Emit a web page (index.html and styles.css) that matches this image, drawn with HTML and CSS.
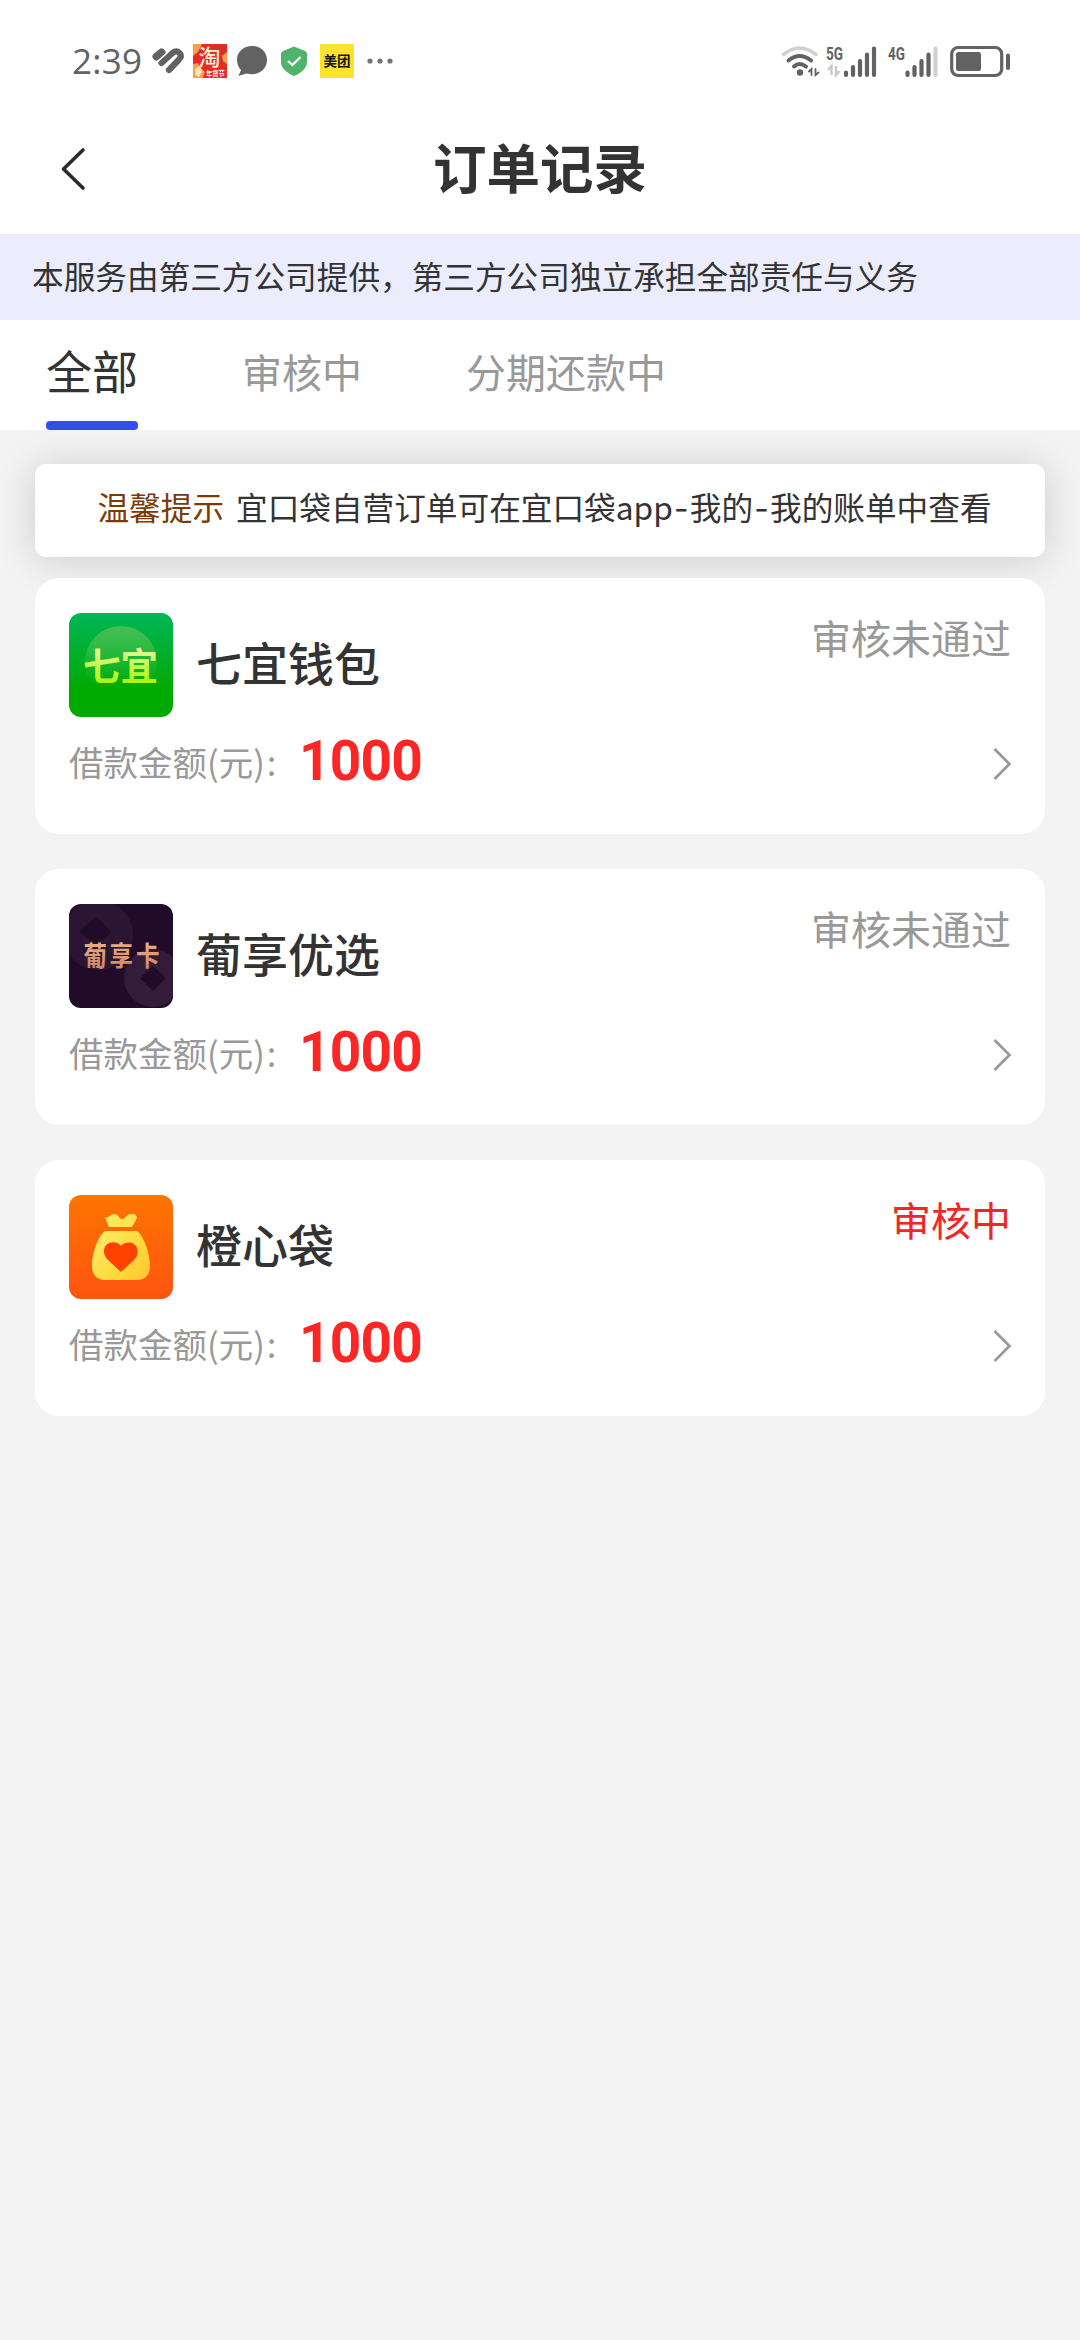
FILE: index.html
```html
<!DOCTYPE html>
<html lang="zh-CN">
<head>
<meta charset="utf-8">
<title>订单记录</title>
<link rel="stylesheet" href="styles.css">
</head>
<body>
<header class="top">
  <div class="status">
    <span class="time">2:39</span>
    <svg class="health" width="34" height="34" viewBox="0 0 34 34">
      <path d="M4.500 12.500L9.500 8.500" stroke="#626262" stroke-width="8" stroke-linecap="round"/>
      <path d="M9.500 19L20.500 9Q25 5.500 28 9.500Q30 12.500 27 15.500L17 26" fill="none" stroke="#626262" stroke-width="6.200" stroke-linecap="round" stroke-linejoin="round"/>
      <path d="M13 22.500L24 12" stroke="#fff" stroke-width="1.600" stroke-linecap="round"/>
      <path d="M6 17L15.500 8.500" stroke="#fff" stroke-width="1.200"/>
    </svg>
    <svg class="taobao" width="34" height="34" viewBox="0 0 34 34">
      <path d="M0 0H34V34H0Z" fill="#e62a25"/>
      <path d="M0 0H9L5 8 0 12ZM34 8L29 12 30 17 34 20ZM0 20L5 19 8 24 12 28 10 34H0Z" fill="#f7a04c"/>
      <path d="M2 25L7 22 9 28 6 33 2 31Z" fill="#ffe3bd"/>
      <text x="5.500" y="21" font-size="22" font-weight="500" fill="#fff2dc">淘</text>
      <text x="13" y="31.500" font-size="6.300" font-weight="700" fill="#fff">年货节</text>
    </svg>
    <svg class="chat" width="32" height="34" viewBox="0 0 32 34">
      <path d="M16 2C7.500 2 1 8 1 15.500c0 4.500 1.500 8 4 10.500L2.500 32l8-2.500c1.800.5 3.600.8 5.500.8 8.500 0 15-6.300 15-14.300S24.500 2 16 2Z" fill="#626262"/>
    </svg>
    <svg class="shield" width="28" height="34" viewBox="0 0 28 34">
      <path d="M14 2.500L25 7Q27 7.800 27 10V18C27 25 20 29.500 14 32 8 29.500 1 25 1 18V10Q1 7.800 3 7Z" fill="#50b36c"/>
      <path d="M8 17L12.500 21 20.500 13" fill="none" stroke="#fff" stroke-width="2.300"/>
    </svg>
    <svg class="meituan" width="34" height="34" viewBox="0 0 34 34">
      <path d="M0 0H34V34H0Z" fill="#fbe22d"/>
      <text x="3.500" y="22" font-size="13.500" font-weight="700" fill="#151515">美团</text>
    </svg>
    <svg class="more" width="28" height="34" viewBox="0 0 28 34" fill="#757575">
      <circle cx="4" cy="17" r="2.600"/><circle cx="14" cy="17" r="2.600"/><circle cx="24" cy="17" r="2.600"/>
    </svg>
    <svg class="wifi" width="40" height="34" viewBox="0 0 40 34" fill="none" stroke-linecap="round">
      <path d="M2.500 10.500Q18.500-2.500 35 10.500" stroke="#d0d0d0" stroke-width="3.600"/>
      <path d="M7.500 16.500Q18.500 7.500 30 16.500" stroke="#626262" stroke-width="4"/>
      <path d="M13 22.500Q18.500 17.500 25 22.500" stroke="#626262" stroke-width="4"/>
      <circle cx="19" cy="28.500" r="3.200" fill="#626262"/>
      <path d="M28 27.500L30.500 25V31M34.500 25V31L37.500 28.500" stroke="#626262" stroke-width="1.800"/>
    </svg>
    <svg class="signal5" width="52" height="34" viewBox="0 0 52 34">
      <text x="0" y="15.500" font-size="18" textLength="17" lengthAdjust="spacingAndGlyphs">5G</text>
      <path d="M2 26L5.500 22V31M10 22V31L13.500 27" fill="none" stroke="#c9c9c9" stroke-width="2.400"/>
      <path d="M20 28.500V31M27 23V31M34 17V31M41 10.500V31M48 4.500V31" stroke="#626262" stroke-width="4.200" stroke-linecap="round"/>
    </svg>
    <svg class="signal4" width="52" height="34" viewBox="0 0 52 34">
      <text x="0" y="15.500" font-size="18" textLength="17" lengthAdjust="spacingAndGlyphs">4G</text>
      <path d="M19.500 28.500V31M26.500 23V31M33.500 17V31M40.500 10.500V31" stroke="#626262" stroke-width="4.200" stroke-linecap="round"/>
      <path d="M47.500 4.500V31" stroke="#d0d0d0" stroke-width="4.200" stroke-linecap="round"/>
    </svg>
    <svg class="battery" width="62" height="34" viewBox="0 0 62 34">
      <rect x="1.700" y="3.500" width="50" height="28" rx="6.500" fill="none" stroke="#626262" stroke-width="3.200"/>
      <rect x="6" y="8" width="25" height="19" rx="2.500" fill="#626262"/>
      <path d="M58 11.500V24" stroke="#626262" stroke-width="4" stroke-linecap="round"/>
    </svg>
  </div>
  <div class="nav">
    <svg class="back" width="28" height="48" viewBox="0 0 28 48"><path d="M24 5L4.500 24 24 43" fill="none" stroke="#2b2b2b" stroke-width="3.600" stroke-linecap="round" stroke-linejoin="round"/></svg>
    <h1 class="title">订单记录</h1>
  </div>
</header>
<div class="notice">本服务由第三方公司提供，第三方公司独立承担全部责任与义务</div>
<nav class="tabs">
  <span class="tab active">全部</span>
  <span class="tab">审核中</span>
  <span class="tab">分期还款中</span>
</nav>
<main class="content">
  <div class="tip"><span class="tip-label">温馨提示</span><span class="tip-text">宜口袋自营订单可在宜口袋app<span class="dash">-</span>我的<span class="dash">-</span>我的账单中查看</span></div>
  <section class="card">
    <div class="card-head">
      <svg class="logo" viewBox="0 0 104 104">
        <defs>
          <linearGradient id="green" x2="0" y2="1"><stop stop-color="#00b657"/><stop offset=".75" stop-color="#00aa00"/></linearGradient>
          <linearGradient id="disc" x2="0" y2="1"><stop stop-color="#48bf50"/><stop offset=".8" stop-color="#48bf50" stop-opacity="0"/></linearGradient>
          <linearGradient id="lime" x2="0" y2="1"><stop offset=".2" stop-color="#e7f99b"/><stop offset=".9" stop-color="#a7f500"/></linearGradient>
        </defs>
        <path d="M0 0H104V104H0Z" fill="url(#green)"/>
        <circle cx="52" cy="49" r="36" fill="url(#disc)"/>
        <text x="14" y="67" font-size="37.500" font-weight="700" fill="url(#lime)">七宜</text>
      </svg>
      <h2 class="name">七宜钱包</h2>
      <span class="state">审核未通过</span>
    </div>
    <div class="card-row">
      <span class="label">借款金额(元)<span class="colon">:</span></span><strong class="amount">1000</strong>
      <svg class="arrow" width="20" height="34" viewBox="0 0 20 34"><path d="M2.500 2L17.500 17 2.500 32" fill="none" stroke="#999" stroke-width="2.700"/></svg>
    </div>
  </section>
  <section class="card">
    <div class="card-head">
      <svg class="logo" viewBox="0 0 104 104">
        <defs><linearGradient id="gold" x2="0" y2="1"><stop stop-color="#f0bd8b"/><stop offset="1" stop-color="#ca7e62"/></linearGradient></defs>
        <path d="M0 0H104V104H0Z" fill="#200c29"/>
        <circle cx="29" cy="31" r="35" fill="#2a1532"/><circle cx="84" cy="74" r="29" fill="#321c37"/>
        <path d="M27 12L43 28 27 40 10 28ZM84 62L97 74 84 87 71 74Z" fill="#200c29"/>
        <text transform="translate(0 62) scale(1 1.180)" font-size="23.500" font-weight="700" fill="url(#gold)"><tspan x="14.500">葡</tspan><tspan x="40.500">享</tspan><tspan x="67">卡</tspan></text>
      </svg>
      <h2 class="name">葡享优选</h2>
      <span class="state">审核未通过</span>
    </div>
    <div class="card-row">
      <span class="label">借款金额(元)<span class="colon">:</span></span><strong class="amount">1000</strong>
      <svg class="arrow" width="20" height="34" viewBox="0 0 20 34"><path d="M2.500 2L17.500 17 2.500 32" fill="none" stroke="#999" stroke-width="2.700"/></svg>
    </div>
  </section>
  <section class="card">
    <div class="card-head">
      <svg class="logo" viewBox="0 0 104 104">
        <defs>
          <linearGradient id="orange" x2="0" y2="1"><stop stop-color="#ff7500"/><stop offset="1" stop-color="#ff5410"/></linearGradient>
          <linearGradient id="bag" x2="1" y2="1"><stop stop-color="#fff174"/><stop offset=".6" stop-color="#ffdc3f"/><stop offset="1" stop-color="#ffc52f"/></linearGradient>
        </defs>
        <path d="M0 0H104V104H0Z" fill="url(#orange)"/>
        <path d="M36 22.500C40 23 42 19 46 19C49 19 50 24 53 24C57 24 57 19 62 19C67 18 69 22 67 25L63 32H40ZM36 36H68C74 40 81 57 81 71C81 80 76 85 68 85H36C28 85 23 80 23 71C23 57 30 40 36 36Z" fill="url(#bag)"/>
        <path d="M52 77L39 65C33 59 34 51 40 48C45 46 50 48 52 51C54 48 60 46 65 49C70 53 70 60 65 65Z" fill="#ff4200"/>
      </svg>
      <h2 class="name">橙心袋</h2>
      <span class="state pending">审核中</span>
    </div>
    <div class="card-row">
      <span class="label">借款金额(元)<span class="colon">:</span></span><strong class="amount">1000</strong>
      <svg class="arrow" width="20" height="34" viewBox="0 0 20 34"><path d="M2.500 2L17.500 17 2.500 32" fill="none" stroke="#999" stroke-width="2.700"/></svg>
    </div>
  </section>
</main>
</body>
</html>
```
FILE: styles.css
```css
* { box-sizing: border-box; }
body {
  margin: 0;
  min-height: 2340px;
  background: #f3f3f3;
  color: #333;
  font-family: "Noto Sans CJK SC", sans-serif;
  white-space: nowrap;
}
svg { display: block; flex: none; }
.top { height: 234px; background: #fff; }
.status { display: flex; align-items: center; height: 122px; padding: 0 68px 0 72px; }
.time { width: 80px; font: 35px/40px "Open Sans", sans-serif; letter-spacing: 0.3px; color: #626262; }
.taobao { margin-left: 7px; overflow: visible; }
.chat { margin-left: 9px; }
.shield { margin-left: 12px; }
.meituan { margin-left: 12px; }
.more { margin-left: 12px; }
.wifi { margin-left: auto; }
.signal5 { margin-left: 5px; }
.signal4 { margin-left: 10px; }
.battery { margin-left: 10px; }
.signal5 text, .signal4 text { font-family: Roboto, sans-serif; font-weight: 700; fill: #626262; }
.nav { display: grid; grid-template-columns: 28px 1fr 28px; align-items: center; height: 94px; padding: 0 59px; }
.title { margin: 0; padding-bottom: 6px; text-align: center; font-size: 53.5px; line-height: 80px; font-weight: 700; }
.notice { height: 86px; padding-left: 32px; background: #ebedfd; font-size: 31.65px; line-height: 83px; }
.tabs {
  display: flex;
  gap: 104px;
  height: 110px;
  padding-left: 46px;
  background: #fff;
  position: relative;
  z-index: 1;
}
.tab { font-size: 40px; line-height: 103px; color: #999; }
.tab.active { display: flex; flex-direction: column; justify-content: space-between; font-size: 46px; line-height: 98px; color: #333; }
.tab.active::after { content: ""; height: 9px; border-radius: 4px; background: #334fe8; }
.content { display: flex; flex-direction: column; gap: 35px; padding: 34px 35px; }
.tip {
  display: flex;
  justify-content: center;
  gap: 12px;
  height: 93px;
  margin-bottom: -14px;
  padding-left: 9px;
  background: #fff;
  border-radius: 11px;
  box-shadow: 0 3px 40px rgba(0, 0, 0, .16);
  font-size: 31.65px;
  line-height: 85px;
}
.tip-label { color: #7b3b07; }
.dash { display: inline-block; width: 17px; text-align: center; font-family: Inter, sans-serif; line-height: 1; }
.card { height: 256px; padding: 35px 34px; background: #fff; border-radius: 24px; position: relative; }
.card-head { display: flex; height: 104px; }
.logo { width: 104px; height: 104px; border-radius: 12px; }
.name { margin: 0 0 0 23px; font-size: 46px; line-height: 96px; font-weight: 500; }
.state { margin-left: auto; font-size: 40px; line-height: 49px; color: #999; }
.state.pending { color: #f32525; }
.card-row { display: flex; align-items: center; height: 94px; }
.label { width: 230px; padding-bottom: 5px; font-size: 34.5px; line-height: 89px; color: #999; }
.colon { margin-left: 2px; }
.amount { padding-bottom: 5px; font: 700 55px/89px Roboto, sans-serif; letter-spacing: -0.8px; color: #fb2626; }
.arrow { margin-left: auto; margin-right: -1px; }
```
